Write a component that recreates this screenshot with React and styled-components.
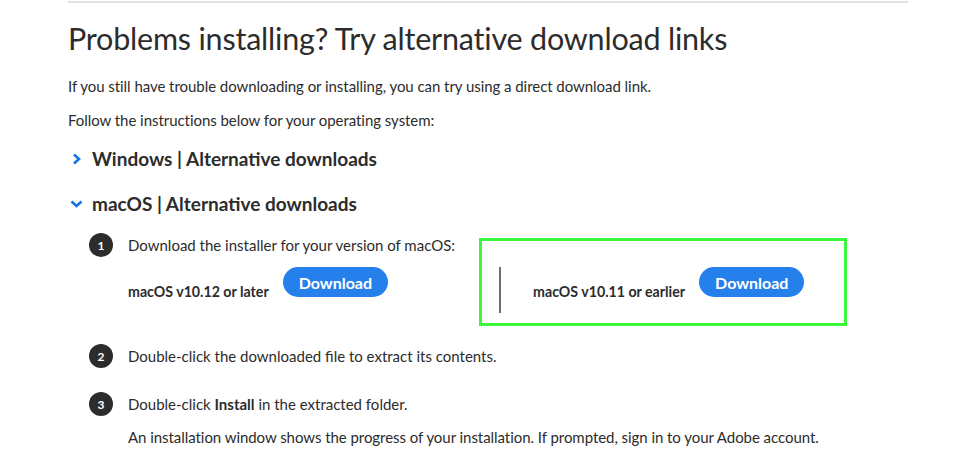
import React from 'react';
import styled, { createGlobalStyle } from 'styled-components';

const GlobalStyle = createGlobalStyle`
  body {
    margin: 0;
    background: #fff;
    font-family: Lato, "Open Sans", sans-serif;
    color: #2c2c2c;
  }
`;

const steps = [
  { n: 2, text: 'Double-click the downloaded file to extract its contents.' },
];

const Page = styled.div`
  width: 840px;
  margin-left: 68px;
  border-top: 2px solid #e1e1e1;
  margin-top: 1px;
`;

const Title = styled.h1`
  margin: 16px 0 0;
  font-size: 30.5px;
  font-weight: 400;
  line-height: 38px;
  letter-spacing: -0.2px;
`;

const Para = styled.p`
  margin: ${(p) => p.top || 0}px 0 0;
  font-size: 15px;
  line-height: 22px;
  letter-spacing: -0.05px;
`;

const Section = styled.div`
  display: flex;
  align-items: center;
  margin-top: ${(p) => p.top}px;
  height: 26px;
`;

const Chevron = styled.span`
  width: 24px;
  display: flex;
  align-items: center;
  color: #1473e6;
  padding-left: ${(p) => (p.open ? 2 : 4)}px;
  box-sizing: border-box;
`;

const SectionTitle = styled.h2`
  margin: 0;
  font-size: 19px;
  font-weight: 700;
  line-height: 26px;
`;

const Steps = styled.ol`
  list-style: none;
  margin: 0;
  padding: 0 0 0 21px;
`;

const Step = styled.li`
  display: flex;
  gap: 15px;
  margin-top: ${(p) => p.top}px;
`;

const Badge = styled.span`
  flex: none;
  width: 24px;
  height: 24px;
  border-radius: 50%;
  background: #2c2c2c;
  color: #fff;
  font-size: 12px;
  font-weight: 700;
  display: flex;
  align-items: center;
  justify-content: center;
  margin-top: -1px;
`;

const StepBody = styled.div`
  font-size: 15px;
  line-height: 22px;
`;

const Options = styled.div`
  display: flex;
  margin-top: 11px;
`;

const Option = styled.div`
  position: relative;
  display: flex;
  align-items: flex-start;
  height: 46px;
  ${(p) =>
    p.divided &&
    `
    margin-left: 111px;
    padding-left: 32px;
    border-left: 2px solid #6e6e6e;
  `}
`;

const OptionLabel = styled.span`
  font-weight: 700;
  font-size: 14.2px;
  line-height: 22px;
  margin: 14px 14px 0 0;
`;

const DownloadButton = styled.button`
  height: 30px;
  padding: 0 16px;
  border: none;
  border-radius: 15px;
  background: #2680eb;
  color: #fff;
  font-family: inherit;
  font-size: 16px;
  font-weight: 700;
  cursor: pointer;
`;

const Highlight = styled.span`
  position: absolute;
  left: -22px;
  top: -29px;
  right: -43px;
  bottom: -13px;
  border: 3px solid #3cf83c;
  pointer-events: none;
`;

const ChevronRight = () => (
  <svg width="10" height="12" viewBox="0 0 10 12">
    <path d="M2 1.5 L7 6 L2 10.5" fill="none" stroke="currentColor" strokeWidth="2.6" />
  </svg>
);

const ChevronDown = () => (
  <svg width="13" height="10" viewBox="0 0 13 10">
    <path d="M1.5 2.5 L6.5 7 L11.5 2.5" fill="none" stroke="currentColor" strokeWidth="2.6" />
  </svg>
);

const App = () => (
  <>
    <GlobalStyle />
    <Page>
      <Title>Problems installing? Try alternative download links</Title>
      <Para top={18}>
        If you still have trouble downloading or installing, you can try using a direct download link.
      </Para>
      <Para top={12}>Follow the instructions below for your operating system:</Para>
      <Section top={15}>
        <Chevron>
          <ChevronRight />
        </Chevron>
        <SectionTitle>Windows | Alternative downloads</SectionTitle>
      </Section>
      <Section top={19}>
        <Chevron open>
          <ChevronDown />
        </Chevron>
        <SectionTitle>macOS | Alternative downloads</SectionTitle>
      </Section>
      <Steps>
        <Step top={17}>
          <Badge>1</Badge>
          <StepBody>
            Download the installer for your version of macOS:
            <Options>
              <Option>
                <OptionLabel>macOS v10.12 or later</OptionLabel>
                <DownloadButton>Download</DownloadButton>
              </Option>
              <Option divided>
                <Highlight />
                <OptionLabel>macOS v10.11 or earlier</OptionLabel>
                <DownloadButton>Download</DownloadButton>
              </Option>
            </Options>
          </StepBody>
        </Step>
        {steps.map((s) => (
          <Step key={s.n} top={32}>
            <Badge>{s.n}</Badge>
            <StepBody>{s.text}</StepBody>
          </Step>
        ))}
        <Step top={25}>
          <Badge>3</Badge>
          <StepBody>
            Double-click <b>Install</b> in the extracted folder.
            <Para top={11}>
              An installation window shows the progress of your installation. If prompted, sign in to
              your Adobe account.
            </Para>
          </StepBody>
        </Step>
      </Steps>
    </Page>
  </>
);

export default App;
